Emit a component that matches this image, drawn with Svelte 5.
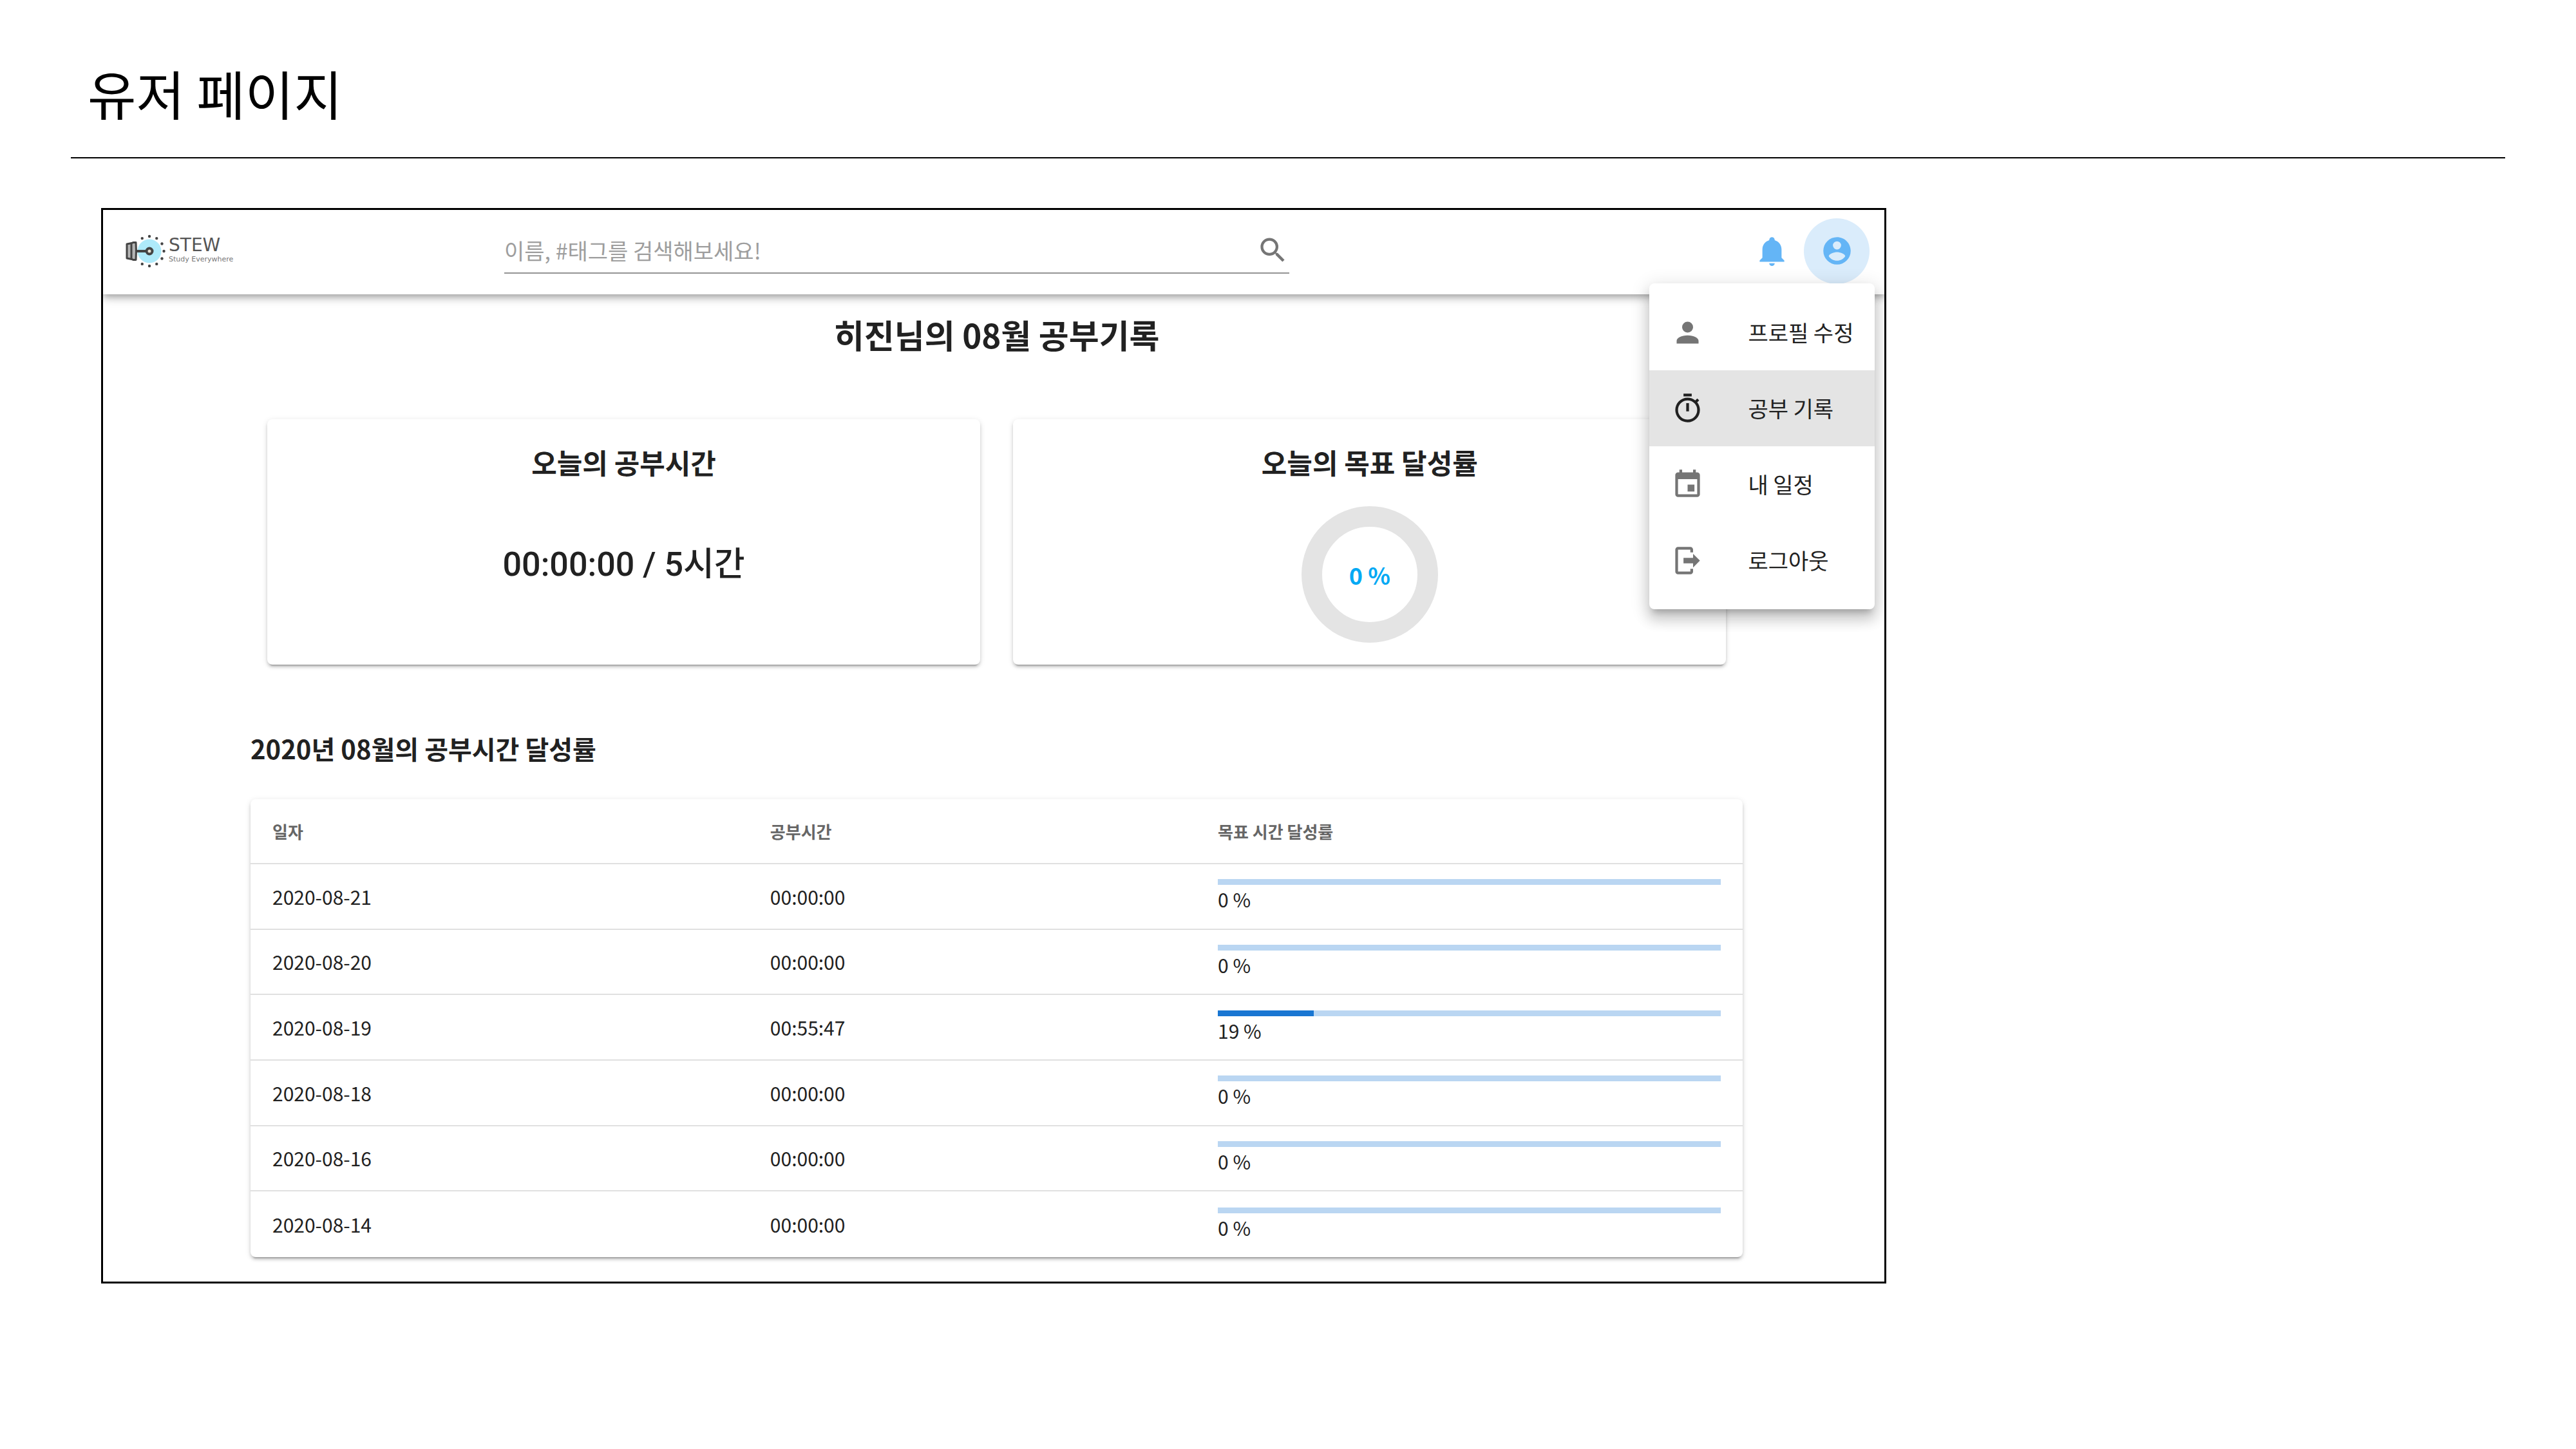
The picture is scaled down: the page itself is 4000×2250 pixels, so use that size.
<script>
  const menu = [
    { label: '프로필 수정', icon: 'M12,4A4,4 0 0,1 16,8A4,4 0 0,1 12,12A4,4 0 0,1 8,8A4,4 0 0,1 12,4M12,14C16.42,14 20,15.79 20,18V20H4V18C4,15.79 7.58,14 12,14Z' },
    { label: '공부 기록', active: true, icon: 'M12,20A7,7 0 0,1 5,13A7,7 0 0,1 12,6A7,7 0 0,1 19,13A7,7 0 0,1 12,20M19.03,7.39L20.45,5.97C20,5.46 19.55,5 19.04,4.56L17.62,6C16.07,4.74 14.12,4 12,4A9,9 0 0,0 3,13A9,9 0 0,0 12,22C17,22 21,17.97 21,13C21,10.88 20.26,8.93 19.03,7.39M11,14H13V8H11M15,1H9V3H15V1Z' },
    { label: '내 일정', icon: 'M19,19H5V8H19M16,1V3H8V1H6V3H5C3.89,3 3,3.89 3,5V19A2,2 0 0,0 5,21H19A2,2 0 0,0 21,19V5C21,3.89 20.1,3 19,3H18V1M17,12H12V17H17V12Z' },
    { label: '로그아웃', icon: 'M16,17V14H9V10H16V7L21,12L16,17M14,2A2,2 0 0,1 16,4V6H14V4H5V20H14V18H16V20A2,2 0 0,1 14,22H5A2,2 0 0,1 3,20V4A2,2 0 0,1 5,2H14Z' },
  ];

  const records = [
    { date: '2020-08-21', time: '00:00:00', rate: 0 },
    { date: '2020-08-20', time: '00:00:00', rate: 0 },
    { date: '2020-08-19', time: '00:55:47', rate: 19 },
    { date: '2020-08-18', time: '00:00:00', rate: 0 },
    { date: '2020-08-16', time: '00:00:00', rate: 0 },
    { date: '2020-08-14', time: '00:00:00', rate: 0 },
  ];

  const rays = Array.from({ length: 9 }, (_, i) => ((i * 30 - 120) * Math.PI) / 180);
</script>

<main class="slide">
  <h1>유저 페이지</h1>

  <div class="app">
    <header class="bar">
      <a class="logo" href="#home" aria-label="STEW">
        <svg class="bulb" viewBox="0 0 64 52" aria-hidden="true">
          <circle cx="38" cy="26" r="18.5" fill="#aeeafa" />
          <g fill="#444">
            {#each rays as a}
              <circle cx={38 + 22.5 * Math.cos(a)} cy={26 + 23 * Math.sin(a)} r="2.2" />
            {/each}
          </g>
          <path d="M3 15L13 13V39L3 37Z" fill="#b5b5b5" stroke="#444" stroke-width="3" stroke-linejoin="round" />
          <path d="M13 12.5H17Q18 26 17 39.5H13L10 38V14Z" fill="#b5b5b5" stroke="#444" stroke-width="3" stroke-linejoin="round" />
          <path d="M18 26H33" stroke="#444" stroke-width="4" />
          <circle cx="38" cy="26" r="4.5" fill="#e8e0d2" stroke="#444" stroke-width="4" />
        </svg>
        <span class="brand">
          <span class="name">STEW</span>
          <span class="tag">Study Everywhere</span>
        </span>
      </a>
      <form class="search" role="search">
        <input type="text" placeholder="이름, #태그를 검색해보세요!" aria-label="검색" />
        <button type="button" aria-label="검색하기">
          <svg class="icon" viewBox="0 0 24 24"><path d="M9.5,3A6.5,6.5 0 0,1 16,9.5C16,11.11 15.41,12.59 14.44,13.73L14.71,14H15.5L20.5,19L19,20.5L14,15.5V14.71L13.73,14.44C12.59,15.41 11.11,16 9.5,16A6.5,6.5 0 0,1 3,9.5A6.5,6.5 0 0,1 9.5,3M9.5,5C7,5 5,7 5,9.5C5,12 7,14 9.5,14C12,14 14,12 14,9.5C14,7 12,5 9.5,5Z" /></svg>
        </button>
      </form>
      <div class="actions">
        <button type="button" aria-label="알림">
          <svg class="icon" viewBox="0 0 24 24"><path d="M21,19V20H3V19L5,17V11C5,7.9 7.03,5.17 10,4.29C10,4.19 10,4.1 10,4A2,2 0 0,1 12,2A2,2 0 0,1 14,4C14,4.1 14,4.19 14,4.29C16.97,5.17 19,7.9 19,11V17L21,19M14,21A2,2 0 0,1 12,23A2,2 0 0,1 10,21" /></svg>
        </button>
        <button type="button" class="on" aria-label="내 계정" aria-expanded="true">
          <svg class="icon" viewBox="0 0 24 24"><path d="M12,19.2C9.5,19.2 7.29,17.92 6,16C6.03,14 10,12.9 12,12.9C14,12.9 17.97,14 18,16C16.71,17.92 14.5,19.2 12,19.2M12,5A3,3 0 0,1 15,8A3,3 0 0,1 12,11A3,3 0 0,1 9,8A3,3 0 0,1 12,5M12,2A10,10 0 0,0 2,12A10,10 0 0,0 12,22A10,10 0 0,0 22,12C22,6.47 17.5,2 12,2Z" /></svg>
        </button>
      </div>
    </header>

    <nav class="menu" aria-label="계정 메뉴">
      {#each menu as item}
        <a href="#menu" class:active={item.active}>
          <svg class="icon" viewBox="0 0 24 24"><path d={item.icon} /></svg>
          <span>{item.label}</span>
        </a>
      {/each}
    </nav>

    <section class="content">
      <h2>히진님의 08월 공부기록</h2>
      <div class="cards">
        <article class="card">
          <h3>오늘의 공부시간</h3>
          <p class="time">00:00:00 / 5시간</p>
        </article>
        <article class="card">
          <h3>오늘의 목표 달성률</h3>
          <div class="ring">0 %</div>
        </article>
      </div>

      <h3 class="heading">2020년 08월의 공부시간 달성률</h3>
      <div class="sheet">
        <table>
          <colgroup><col class="c1" /><col class="c2" /><col /></colgroup>
          <thead>
            <tr><th>일자</th><th>공부시간</th><th>목표 시간 달성률</th></tr>
          </thead>
          <tbody>
            {#each records as r}
              <tr>
                <td>{r.date}</td>
                <td>{r.time}</td>
                <td>
                  <div class="track"><div class="fill" style="width: {r.rate}%"></div></div>
                  <div class="pct">{r.rate} %</div>
                </td>
              </tr>
            {/each}
          </tbody>
        </table>
      </div>
    </section>
  </div>
</main>

<style>
  :global(body) {
    margin: 0;
    background: #fff;
  }
  .slide {
    font-family: 'Noto Sans CJK KR', 'Noto Sans', sans-serif;
    color: #212121;
    padding: 84px 110px 0;
  }
  h1, h2, h3, p {
    margin: 0;
  }
  h1 {
    padding: 0 26px 40px;
    font-size: 82px;
    line-height: 120px;
    font-weight: 400;
    color: #000;
    border-bottom: 2px solid #000;
  }
  button {
    border: 0;
    padding: 0;
    background: none;
    color: inherit;
    display: flex;
    align-items: center;
    justify-content: center;
  }
  a {
    color: inherit;
    text-decoration: none;
  }
  .icon {
    width: 51px;
    height: 51px;
    flex: none;
    fill: currentColor;
  }
  .app {
    position: relative;
    box-sizing: border-box;
    width: calc(73% + 13px);
    margin: 77px 0 0 47px;
    border: 3px solid #000;
    overflow: hidden;
  }
  .bar {
    box-sizing: border-box;
    display: flex;
    align-items: center;
    height: 131px;
    padding: 0 23px 4px 34px;
    box-shadow: 0 4px 8px -2px rgba(0, 0, 0, 0.2), 0 8px 10px rgba(0, 0, 0, 0.14), 0 2px 20px rgba(0, 0, 0, 0.12);
  }
  .logo {
    flex: 0 0 589px;
    display: flex;
    align-items: center;
    gap: 4px;
    height: 52px;
  }
  .bulb {
    width: 64px;
    height: 52px;
  }
  .brand {
    display: flex;
    flex-direction: column;
    color: #555;
    font-family: 'DejaVu Sans', sans-serif;
  }
  .name {
    font-size: 28px;
    line-height: 26px;
  }
  .tag {
    font-size: 11px;
    line-height: 18px;
    color: #777;
  }
  .search {
    width: 45%;
    display: flex;
    align-items: center;
    height: 68px;
    border-bottom: 2px solid #949494;
    color: #757575;
  }
  .search input {
    flex: 1;
    border: 0;
    outline: 0;
    padding: 0;
    background: none;
    font: 34px/50px 'Noto Sans CJK KR', sans-serif;
  }
  .search input::placeholder {
    color: #9e9e9e;
    opacity: 1;
  }
  .actions {
    display: flex;
    margin-left: auto;
    color: #64b5f6;
  }
  .actions button {
    width: 100px;
    height: 102px;
  }
  .actions .on {
    width: 102px;
    border-radius: 50%;
    background: #daecfb;
  }
  .menu {
    position: absolute;
    z-index: 2;
    top: 114px;
    right: 15px;
    width: 350px;
    box-sizing: border-box;
    padding: 17px 0;
    border-radius: 8px;
    background: #fff;
    box-shadow: 0 10px 10px -6px rgba(0, 0, 0, 0.2), 0 16px 20px 2px rgba(0, 0, 0, 0.14), 0 6px 28px 4px rgba(0, 0, 0, 0.12);
  }
  .menu a {
    display: flex;
    align-items: center;
    gap: 68px;
    height: 118px;
    padding: 0 34px;
    font-size: 34px;
    line-height: 50px;
    white-space: nowrap;
  }
  .menu .icon {
    color: #757575;
  }
  .menu .active {
    background: #e4e4e4;
  }
  .menu .active .icon {
    color: #212121;
  }
  .content {
    padding: 30px 220px 38px 229px;
  }
  h2 {
    font-size: 51px;
    line-height: 64px;
    font-weight: 700;
    text-align: center;
  }
  .cards {
    display: grid;
    grid-template-columns: 1fr 1fr;
    gap: 51px;
    margin: 100px 26px 0;
  }
  .card,
  .sheet {
    border-radius: 8px;
    background: #fff;
    box-shadow: 0 6px 2px -4px rgba(0, 0, 0, 0.2), 0 4px 4px rgba(0, 0, 0, 0.14), 0 2px 10px rgba(0, 0, 0, 0.12);
  }
  .card {
    box-sizing: border-box;
    min-height: 381px;
    padding: 36px 34px 33px;
    text-align: center;
  }
  .card h3 {
    font-size: 43px;
    line-height: 60px;
    font-weight: 700;
  }
  .time {
    margin-top: 98px;
    font-family: Roboto, 'Noto Sans CJK KR', sans-serif;
    font-size: 52px;
    line-height: 64px;
    font-weight: 500;
  }
  .ring {
    box-sizing: border-box;
    width: 212px;
    height: 212px;
    margin: 39px auto 0;
    border: 32px solid #e4e4e4;
    border-radius: 50%;
    line-height: 148px;
    font-size: 36px;
    font-weight: 700;
    color: #03a9f4;
  }
  .heading {
    margin: 100px 0 49px;
    font-size: 40px;
    line-height: 60px;
    font-weight: 700;
  }
  table {
    width: 100%;
    height: 711px;
    table-layout: fixed;
    border-collapse: separate;
    border-spacing: 0;
    font-size: 30px;
    line-height: 40px;
  }
  .c1 {
    width: 33.35%;
  }
  .c2 {
    width: 30%;
  }
  tr {
    height: 101px;
  }
  th,
  td {
    box-sizing: border-box;
    padding: 0 34px;
    text-align: left;
    border-bottom: 2px solid #e0e0e0;
  }
  th {
    font-size: 26px;
    font-weight: 700;
    color: #666;
  }
  tbody tr:last-child td {
    border-bottom: 0;
  }
  .track {
    height: 9px;
    background: #bad6f2;
  }
  .fill {
    height: 100%;
    background: #1976d2;
  }
  .pct {
    line-height: 44px;
  }
</style>
